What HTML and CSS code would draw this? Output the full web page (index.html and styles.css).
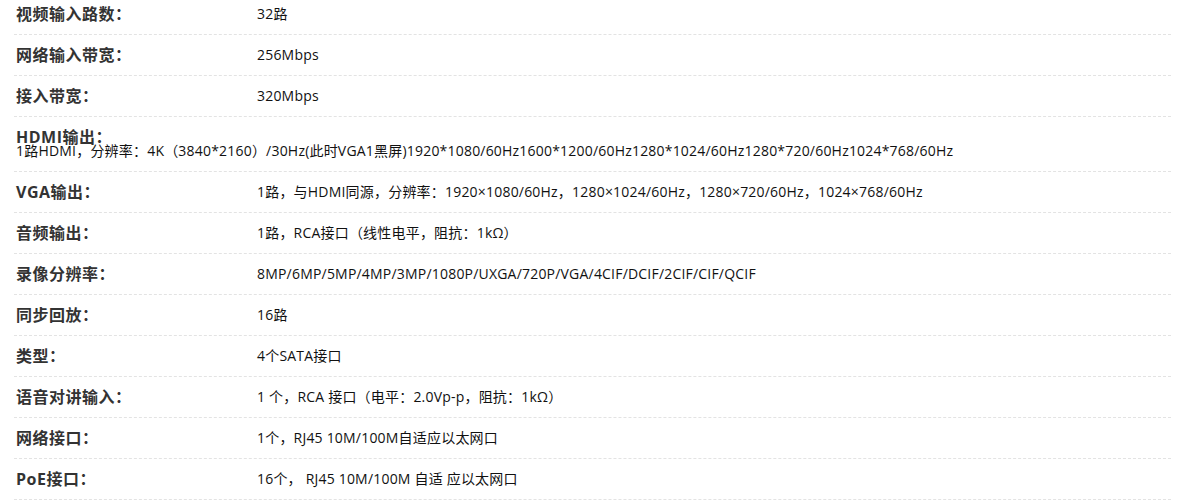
FILE: index.html
```html
<!DOCTYPE html>
<html lang="zh-CN">
<head>
  <meta charset="UTF-8" />
  <title>产品参数</title>
  <link rel="stylesheet" href="styles.css">
</head>
<body>
  <ul class="spec-list">
    <li class="spec-row"><span class="spec-name">视频输入路数：</span><span class="spec-value">32路</span></li>
    <li class="spec-row"><span class="spec-name">网络输入带宽：</span><span class="spec-value">256Mbps</span></li>
    <li class="spec-row"><span class="spec-name">接入带宽：</span><span class="spec-value">320Mbps</span></li>
    <li class="spec-row wrap"><span class="spec-name">HDMI输出：</span><span class="spec-value">1路HDMI，分辨率：4K（3840*2160）/30Hz(此时VGA1黑屏)1920*1080/60Hz1600*1200/60Hz1280*1024/60Hz1280*720/60Hz1024*768/60Hz</span></li>
    <li class="spec-row"><span class="spec-name">VGA输出：</span><span class="spec-value">1路，与HDMI同源，分辨率：1920×1080/60Hz，1280×1024/60Hz，1280×720/60Hz，1024×768/60Hz</span></li>
    <li class="spec-row"><span class="spec-name">音频输出：</span><span class="spec-value">1路，RCA接口（线性电平，阻抗：1kΩ）</span></li>
    <li class="spec-row"><span class="spec-name">录像分辨率：</span><span class="spec-value">8MP/6MP/5MP/4MP/3MP/1080P/UXGA/720P/VGA/4CIF/DCIF/2CIF/CIF/QCIF</span></li>
    <li class="spec-row"><span class="spec-name">同步回放：</span><span class="spec-value">16路</span></li>
    <li class="spec-row"><span class="spec-name">类型：</span><span class="spec-value">4个SATA接口</span></li>
    <li class="spec-row"><span class="spec-name">语音对讲输入：</span><span class="spec-value">1 个，RCA 接口（电平：2.0Vp-p，阻抗：1kΩ）</span></li>
    <li class="spec-row"><span class="spec-name">网络接口：</span><span class="spec-value">1个，RJ45 10M/100M自适应以太网口</span></li>
    <li class="spec-row"><span class="spec-name">PoE接口：</span><span class="spec-value">16个， RJ45 10M/100M 自适 应以太网口</span></li>
  </ul>
</body>
</html>
```

FILE: styles.css
```css
body {
  margin: 0;
  background: #fff;
  font-family: "Open Sans", "Noto Sans CJK SC", sans-serif;
}

.spec-list {
  list-style: none;
  margin: -6px 0 0 14px;
  padding: 0;
  width: 1157px;
}

.spec-row {
  display: flex;
  flex-wrap: wrap;
  align-items: center;
  padding: 13px 0 13px 2px;
  border-bottom: 1px dashed #e3e3e3;
  line-height: 14px;
}

.spec-name {
  width: 241px;
  font-size: 16px;
  font-weight: bold;
  color: #333;
  letter-spacing: 0.5px;
}

.spec-value {
  font-size: 14px;
  color: #111;
  letter-spacing: 0.2px;
}

.wrap .spec-name {
  width: 100%;
}
```
